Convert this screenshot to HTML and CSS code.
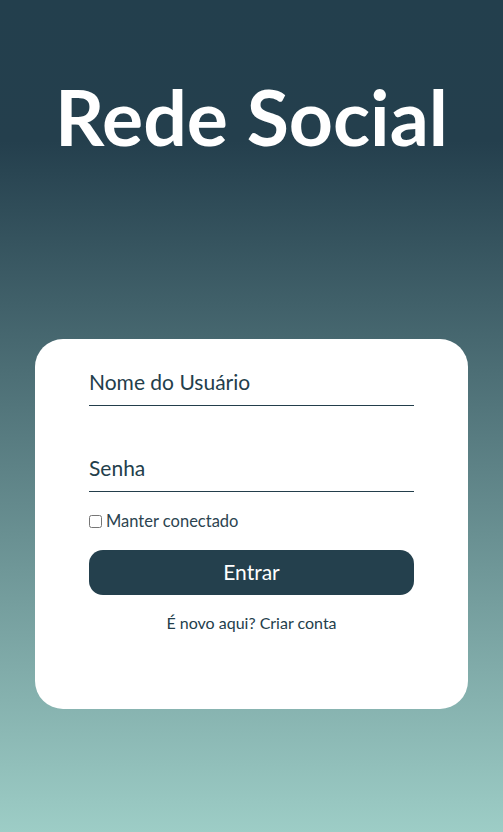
FILE: index.html
```html
<!DOCTYPE html>
<html lang="pt-BR">
<head>
<meta charset="utf-8">
<title>Rede Social</title>
<link rel="stylesheet" href="styles.css">
</head>
<body>
<main class="page">
  <header class="header">
    <h1 class="title">Rede Social</h1>
  </header>
  <form class="card">
    <input class="field" type="text" placeholder="Nome do Usuário">
    <input class="field field-pass" type="password" placeholder="Senha">
    <label class="remember">
      <input class="check" type="checkbox">
      <span>Manter conectado</span>
    </label>
    <button class="btn" type="button">Entrar</button>
    <p class="signup">É novo aqui? <a class="signup-link" href="#">Criar conta</a></p>
  </form>
</main>
</body>
</html>
```

FILE: styles.css
```css
* { box-sizing: border-box; }
html, body { margin: 0; padding: 0; }
body {
  min-height: 100vh;
  font-family: Lato, "Open Sans", sans-serif;
  color: #233e4b;
  background: linear-gradient(180deg, #233f4d 0%, #243f4d 17%, #9dcdc6 100%);
}
.page {
  min-height: 100vh;
  display: flex;
  flex-direction: column;
  align-items: center;
}
.header {
  padding-top: 78px;
  height: 339px;
}
.title {
  margin: 0;
  font-size: 77px;
  line-height: 77px;
  font-weight: 700;
  color: #ffffff;
  text-align: center;
}
.card {
  width: 433px;
  background: #ffffff;
  border-radius: 28px;
  padding: 27px 54px 76px;
  display: flex;
  flex-direction: column;
}
.field {
  display: block;
  width: 100%;
  border: 0;
  border-bottom: 1px solid #233e4b;
  outline: none;
  background: transparent;
  font-family: inherit;
  font-size: 21px;
  line-height: 24px;
  padding: 3px 0 12px;
  height: 40px;
  color: #233e4b;
}
.field::placeholder { color: #233e4b; opacity: 1; }
.field-pass { margin-top: 46px; }
.remember {
  margin-top: 20px;
  display: flex;
  align-items: center;
  font-size: 16.5px;
  line-height: 18px;
  color: #2c4450;
}
.check {
  margin: 0 4px 0 0;
  width: 13px;
  height: 13px;
}
.btn {
  margin-top: 20px;
  height: 45px;
  border: 0;
  border-radius: 14px;
  background: #24404d;
  color: #ffffff;
  font-family: inherit;
  font-size: 21px;
  padding: 0 0 2px;
  cursor: pointer;
}
.signup {
  margin: 18px 0 0;
  text-align: center;
  font-size: 16px;
  line-height: 20px;
}
.signup-link { color: inherit; text-decoration: none; }
```
